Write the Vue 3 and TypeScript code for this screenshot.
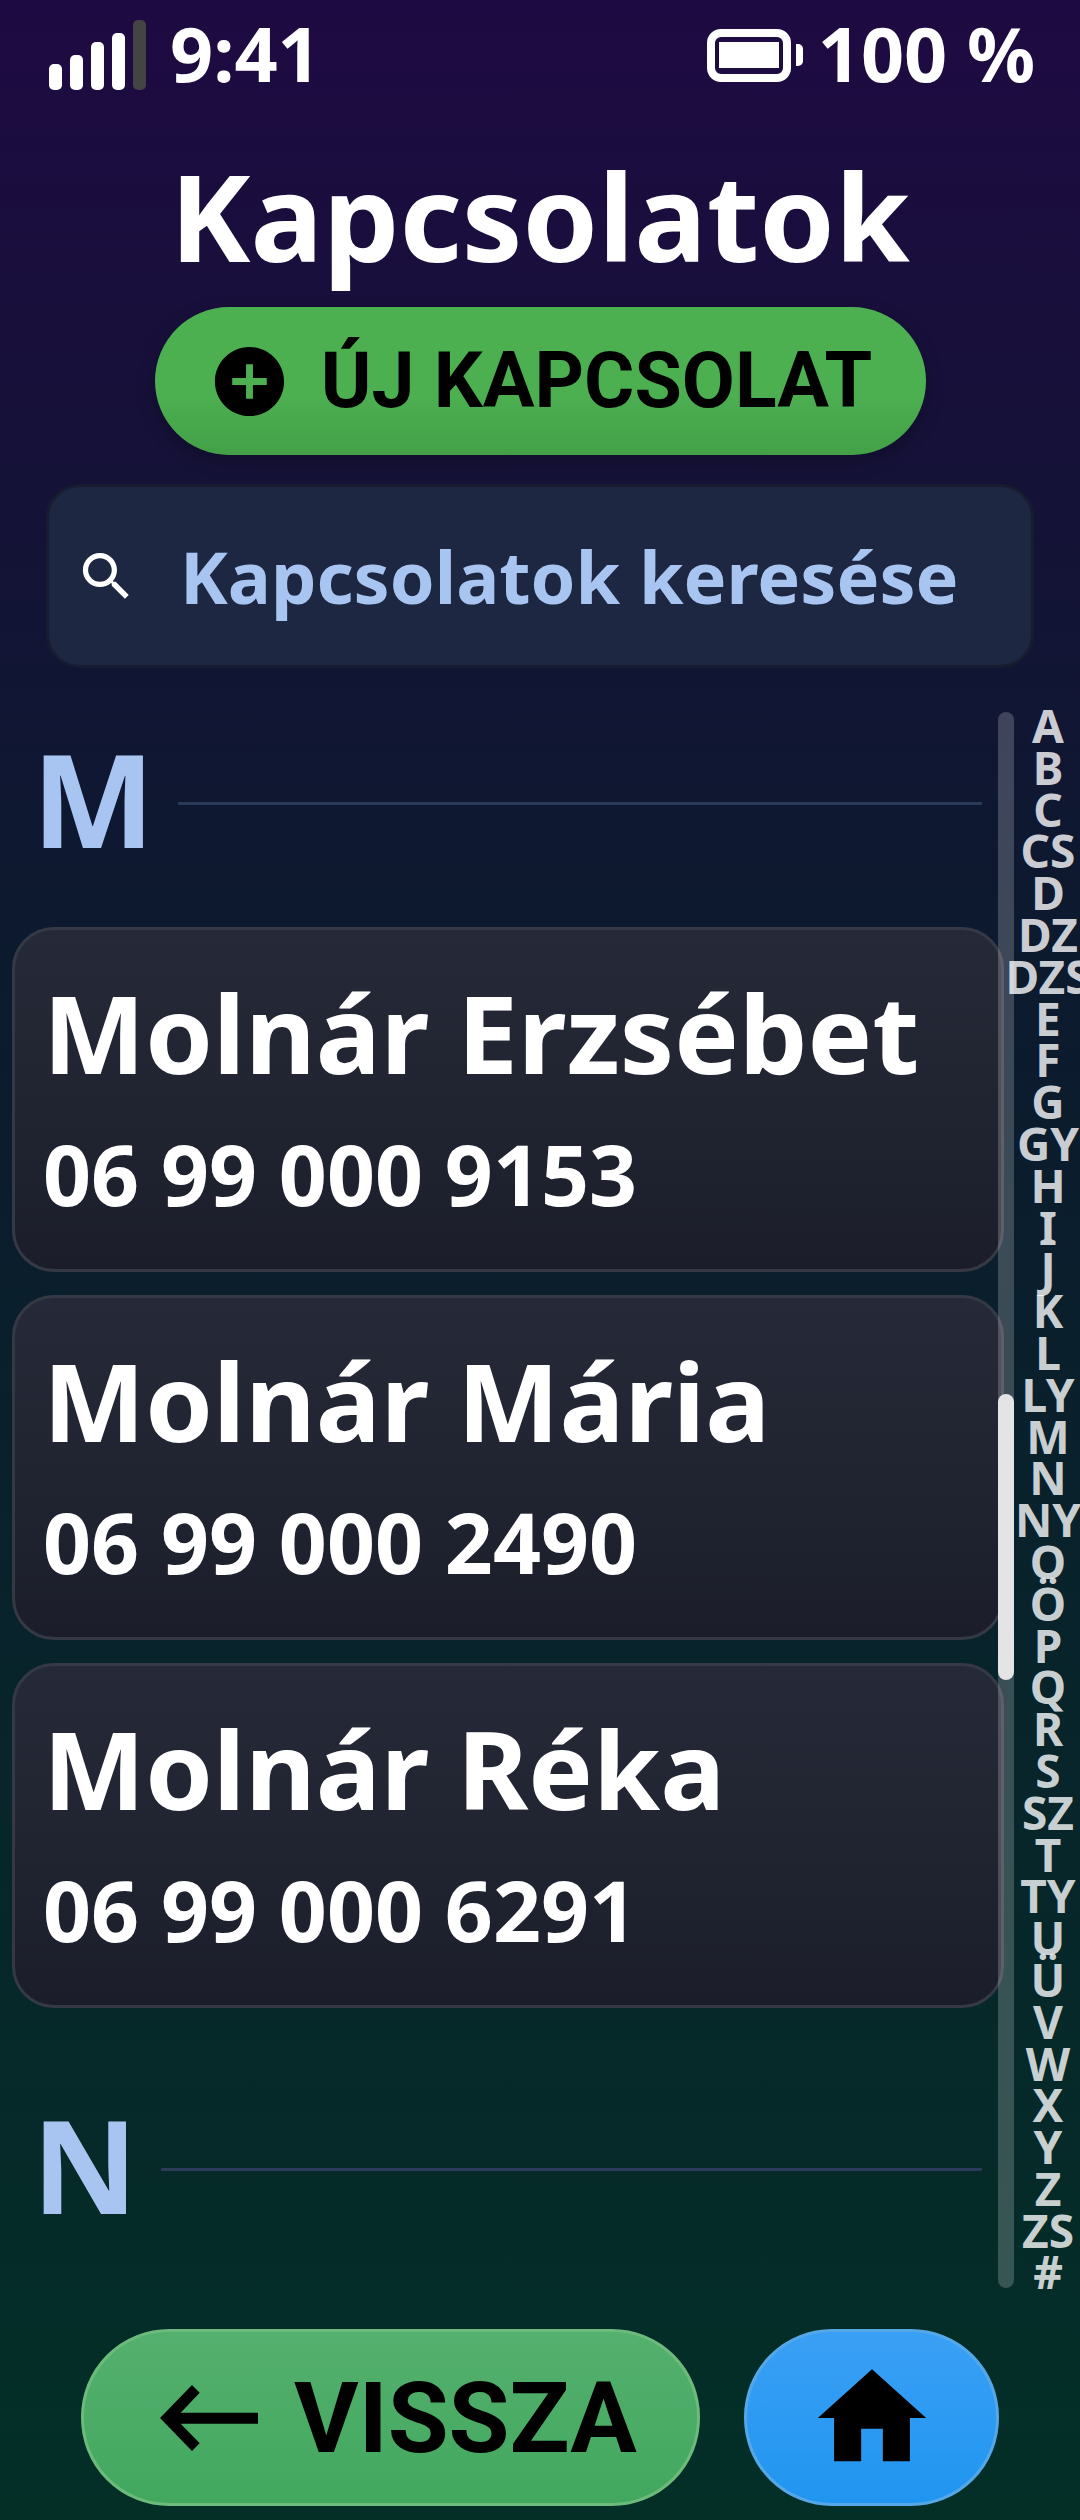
<script setup lang="ts">
const letters: string[] = ['A','B','C','CS','D','DZ','DZS','E','F','G','GY','H','I','J','K','L','LY','M','N','NY','O','Ö','P','Q','R','S','SZ','T','TY','U','Ü','V','W','X','Y','Z','ZS','#']
const contacts = [
  { name: 'Molnár Erzsébet', phone: '06 99 000 9153' },
  { name: 'Molnár Mária', phone: '06 99 000 2490' },
  { name: 'Molnár Réka', phone: '06 99 000 6291' },
]
const bars: number[] = [26, 35, 48, 57]
</script>

<template>
  <div class="page">
    <header class="status">
      <div class="status-left">
        <div class="signal">
          <span v-for="h in bars" :key="h" class="bar" :style="{ height: h + 'px' }"></span>
          <span class="bar off"></span>
        </div>
        <span class="status-text">9:41</span>
      </div>
      <div class="status-right">
        <svg class="battery" viewBox="0 0 96 53" width="96" height="53">
          <rect x="4" y="4" width="76" height="45" rx="10" fill="none" stroke="#fff" stroke-width="8" />
          <rect x="12" y="13" width="60" height="26" fill="#fff" />
          <path d="M89 15h2a5 5 0 0 1 5 5v12a5 5 0 0 1-5 5h-2z" fill="#fff" />
        </svg>
        <span class="status-text">100 %</span>
      </div>
    </header>

    <h1 class="title">Kapcsolatok</h1>

    <button class="new-btn">
      <svg viewBox="0 0 24 24" width="83" height="83"><path d="M12 2C6.48 2 2 6.48 2 12s4.48 10 10 10 10-4.48 10-10S17.52 2 12 2zm5 11h-4v4h-2v-4H7v-2h4V7h2v4h4v2z" fill="#000"/></svg>
      <span>ÚJ KAPCSOLAT</span>
    </button>

    <div class="search">
      <svg viewBox="0 0 24 24" width="63" height="63"><path d="M15.5 14h-.79l-.28-.27C15.41 12.59 16 11.11 16 9.5 16 5.91 13.09 3 9.5 3S3 5.91 3 9.5 5.91 16 9.5 16c1.61 0 3.09-.59 4.23-1.57l.27.28v.79l5 4.99L20.49 19l-4.99-5zm-6 0C7.01 14 5 11.99 5 9.5S7.01 5 9.5 5 14 7.01 14 9.5 11.99 14 9.5 14z" fill="#fff"/></svg>
      <span class="search-text">Kapcsolatok keresése</span>
    </div>

    <main class="content">
      <div class="list">
        <div class="section-head">
          <span class="section-letter">M</span>
          <span class="section-line"></span>
        </div>
        <div class="cards">
          <article v-for="c in contacts" :key="c.phone" class="card">
            <div class="name">{{ c.name }}</div>
            <div class="phone">{{ c.phone }}</div>
          </article>
        </div>
        <div class="section-head second">
          <span class="section-letter">N</span>
          <span class="section-line"></span>
        </div>
      </div>
      <div class="track"><div class="thumb"></div></div>
      <nav class="alpha">
        <span v-for="l in letters" :key="l" class="alpha-item">{{ l }}</span>
      </nav>
    </main>

    <footer class="nav">
      <button class="back-btn">
        <svg viewBox="0 0 98 66" width="98" height="66"><path d="M0 33 32 0l7.7 7.7L20.7 27.7H98v11H20.7l19 19.6L32 66z" fill="#000"/></svg>
        <span>VISSZA</span>
      </button>
      <button class="home-btn">
        <svg viewBox="0 0 24 24" width="130" height="130"><path d="M10 20v-6h4v6h5v-8h3L12 3 2 12h3v8z" fill="#000"/></svg>
      </button>
    </footer>
  </div>
</template>

<style>
html, body { margin: 0; padding: 0; }
</style>

<style scoped>
.page {
  width: 1080px;
  height: 2520px;
  overflow: hidden;
  display: flex;
  flex-direction: column;
  background: linear-gradient(180deg, #1e0a42 0%, #0c1a2e 38%, #032f27 100%);
  font-family: "Noto Sans", "Open Sans", sans-serif;
  color: #fff;
}
.status {
  height: 110px;
  flex: none;
  display: flex;
  align-items: center;
  justify-content: space-between;
  padding: 0 45px 0 49px;
  box-sizing: border-box;
}
.status-left, .status-right { display: flex; align-items: center; }
.status-left { gap: 24px; }
.status-right { gap: 15px; }
.status-text { font-size: 75.5px; font-weight: 700; line-height: 1; margin-top: -5px; }
.signal { display: flex; align-items: flex-end; gap: 8px; height: 70px; }
.bar { width: 13px; background: #fff; border-radius: 5px; }
.bar.off { height: 70px; background: #444; }
.title {
  margin: 28px 0 0;
  text-align: center;
  font-size: 121px;
  line-height: 155px;
  font-weight: 700;
  height: 155px;
}
.new-btn {
  align-self: center;
  width: 771px;
  height: 148px;
  flex: none;
  margin-top: 14px;
  border: 0;
  border-radius: 74px;
  background: linear-gradient(180deg, #4caf50 0%, #4caf50 60%, #43a047 100%);
  box-shadow: 0 6px 18px rgba(0, 0, 0, .25);
  display: flex;
  align-items: center;
  justify-content: center;
  gap: 30px;
  font-family: Roboto, sans-serif;
  font-weight: 700;
  font-size: 77px;
  color: #000;
  padding: 0;
}
.search {
  margin: 29px 46px 0;
  height: 184px;
  flex: none;
  box-sizing: border-box;
  background: #1e2742;
  border: 3px solid #171c30;
  border-radius: 34px;
  display: flex;
  align-items: center;
  padding-left: 26px;
  gap: 42px;
}
.search-text { font-size: 72px; font-weight: 700; color: #a8c4f0; }
.content { position: relative; flex: 1; min-height: 0; }
.list { width: 1004px; height: 100%; overflow: hidden; }
.section-head {
  display: flex;
  align-items: center;
  gap: 23px;
  padding: 0 22px 0 32px;
  height: 130px;
  margin-top: 70px;
  margin-bottom: 59px;
}
.section-head.second { margin-top: 96px; }
.section-letter {
  font-size: 130px;
  font-weight: 700;
  line-height: 130px;
  margin-top: -11px;
  color: #a8c4f0;
}
.section-line { flex: 1; height: 3px; background: #2a3a58; }
.cards { display: flex; flex-direction: column; gap: 23px; padding-left: 12px; }
.card {
  height: 345px;
  box-sizing: border-box;
  border: 3px solid #353946;
  border-radius: 42px;
  background: linear-gradient(180deg, #262a38 0%, #1b1e2a 100%);
  padding: 32px 0 0 28px;
}
.name { font-size: 108.4px; font-weight: 700; line-height: 140px; }
.phone { font-size: 84px; font-weight: 700; line-height: 114px; margin-top: 15px; }
.track {
  position: absolute;
  left: 998px;
  top: 44px;
  width: 16px;
  height: 1576px;
  border-radius: 8px;
  background: rgba(255, 255, 255, .2);
}
.thumb {
  position: absolute;
  left: 0;
  top: 682px;
  width: 100%;
  height: 286px;
  border-radius: 8px;
  background: #e4e4e4;
}
.alpha {
  position: absolute;
  left: 1016px;
  top: 37px;
  width: 64px;
  display: flex;
  flex-direction: column;
  align-items: center;
}
.alpha-item {
  height: 41.8px;
  line-height: 41.8px;
  font-size: 46px;
  font-weight: 700;
  color: rgba(255, 255, 255, .8);
  white-space: nowrap;
}
.nav {
  height: 191px;
  flex: none;
  display: flex;
  padding: 0 0 14px 81px;
  box-sizing: border-box;
  gap: 44px;
}
.back-btn, .home-btn {
  height: 177px;
  border-radius: 88px;
  padding: 0;
  display: flex;
  align-items: center;
  color: #000;
  font-family: Roboto, sans-serif;
  font-weight: 700;
  font-size: 99px;
  box-sizing: border-box;
}
.back-btn {
  width: 619px;
  gap: 36px;
  padding-left: 76px;
  border: 3px solid #6cba7c;
  background: linear-gradient(180deg, #54b06e 0%, #42a85e 100%);
}
.home-btn {
  width: 255px;
  justify-content: center;
  border: 3px solid #55a8e8;
  background: linear-gradient(180deg, #3aa0f5 0%, #2095f0 100%);
}
</style>
